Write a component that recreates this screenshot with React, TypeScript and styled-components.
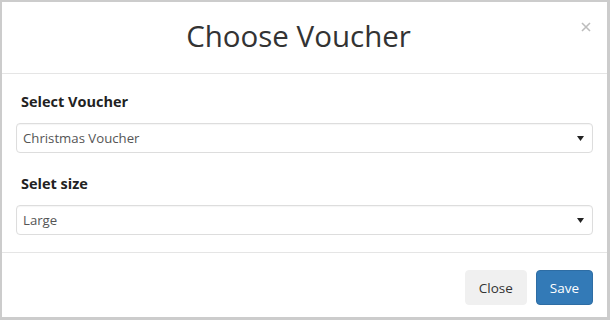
import styled, { createGlobalStyle } from "styled-components";

const GlobalStyle = createGlobalStyle`
  html, body {
    margin: 0;
    padding: 0;
    background: #ffffff;
  }
  body {
    font-family: "Open Sans", "Noto Sans", sans-serif;
    color: #333333;
  }
`;

const Frame = styled.div`
  width: 610px;
  height: 320px;
  box-sizing: border-box;
  border-style: solid;
  border-color: #cccccc;
  border-width: 2px 3px 3px 2px;
  background: #ffffff;
  display: flex;
  flex-direction: column;
`;

const Header = styled.div`
  display: flex;
  align-items: flex-start;
  padding: 14px 15px 17px 15px;
  border-bottom: 1px solid #e5e5e5;
`;

const Title = styled.h4`
  flex: 1;
  margin: 0;
  text-align: center;
  font-size: 29.5px;
  line-height: 40px;
  font-weight: 500;
  color: #333333;
`;

const CloseX = styled.button`
  border: none;
  background: none;
  padding: 0;
  margin: 5px 0 0 0;
  width: 12px;
  height: 12px;
  display: flex;
  align-items: center;
  justify-content: center;
  cursor: pointer;
`;

const Body = styled.div`
  padding: 18px 14px 17px 14px;
  border-bottom: 1px solid #e5e5e5;
  display: flex;
  flex-direction: column;
  gap: 21px;
`;

const Group = styled.div`
  display: flex;
  flex-direction: column;
`;

const Label = styled.label`
  font-size: 14.5px;
  line-height: 20px;
  font-weight: 700;
  color: #222222;
  margin-bottom: 11px;
  padding-left: 5px;
`;

const SelectBox = styled.div`
  height: 30px;
  box-sizing: border-box;
  border: 1px solid #dddddd;
  border-radius: 4px;
  box-shadow: inset 0 1px 1px rgba(0, 0, 0, 0.04);
  display: flex;
  align-items: center;
  justify-content: space-between;
  padding: 0 8px 0 6px;
  font-size: 13.2px;
  color: #555555;
`;

const Footer = styled.div`
  display: flex;
  justify-content: flex-end;
  gap: 9px;
  padding: 17px 14px 13px 14px;
`;

const Button = styled.button<{ $primary?: boolean }>`
  height: 35px;
  box-sizing: border-box;
  padding: 0 13px;
  border-radius: 4px;
  font-family: "Open Sans", "Noto Sans", sans-serif;
  font-size: 13.5px;
  border: 1px solid ${(p) => (p.$primary ? "#2e6da4" : "#f0f0f0")};
  background: ${(p) => (p.$primary ? "#337ab7" : "#f0f0f0")};
  color: ${(p) => (p.$primary ? "#ffffff" : "#333333")};
  cursor: pointer;
`;

function Caret() {
  return (
    <svg width="7" height="5" viewBox="0 0 7 5">
      <path d="M0 0 L7 0 L3.5 5 Z" fill="#222222" />
    </svg>
  );
}

function Select({ value }: { value: string }) {
  return (
    <SelectBox role="listbox">
      <span>{value}</span>
      <Caret />
    </SelectBox>
  );
}

export default function App() {
  return (
    <>
      <GlobalStyle />
      <Frame>
        <Header>
          <Title>Choose Voucher</Title>
          <CloseX aria-label="Close">
            <svg width="10" height="10" viewBox="0 0 10 10">
              <path d="M1 1 L9 9 M9 1 L1 9" stroke="#bdbdbd" strokeWidth="1.6" />
            </svg>
          </CloseX>
        </Header>
        <Body>
          <Group>
            <Label>Select Voucher</Label>
            <Select value="Christmas Voucher" />
          </Group>
          <Group>
            <Label>Selet size</Label>
            <Select value="Large" />
          </Group>
        </Body>
        <Footer>
          <Button>Close</Button>
          <Button $primary>Save</Button>
        </Footer>
      </Frame>
    </>
  );
}
